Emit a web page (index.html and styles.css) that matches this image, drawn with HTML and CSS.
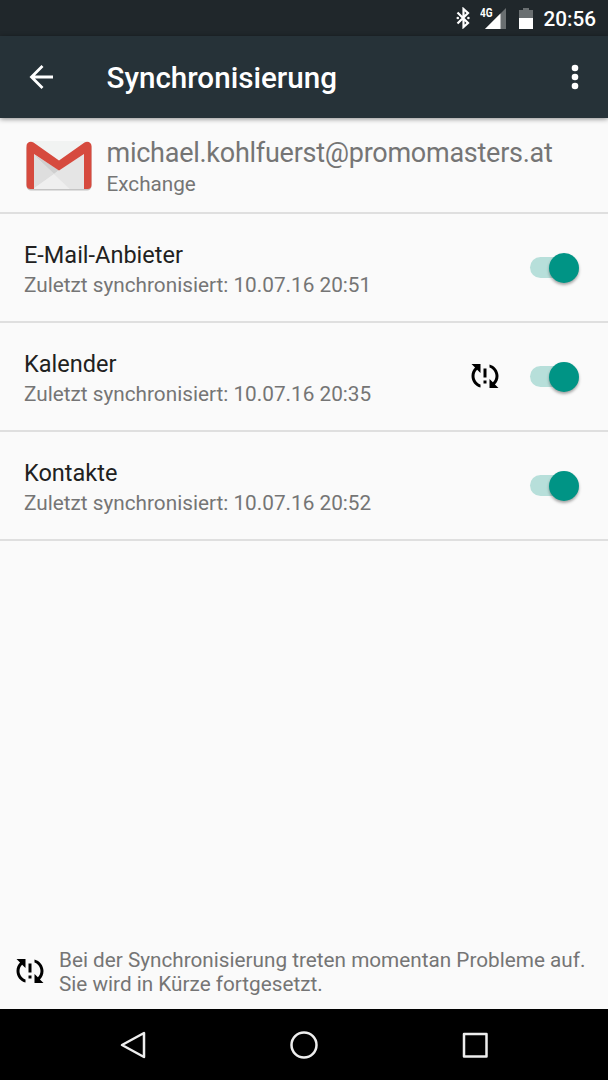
FILE: index.html
```
<!DOCTYPE html>
<html lang="de">
<head>
    <meta charset="UTF-8">
    <meta name="viewport" content="width=device-width, initial-scale=1.0">
    <title>Synchronisierung</title>
    <link rel="stylesheet" href="styles.css">
</head>
<body>
    <!-- Sync problem icon, shared by the list and the footer -->
    <svg class="icon-defs" width="0" height="0">
        <symbol id="sync-problem" viewBox="0 0 24 24">
            <path d="M3 12c0-2.21.91-4.2 2.36-5.64L3 4h6v6L6.76 7.76C5.68 8.85 5 10.34 5 12c0 2.61 1.67 4.83 4 5.65v2.09C5.55 18.85 3 15.73 3 12zM21 20h-6v-6l2.24 2.24C18.32 15.15 19 13.66 19 12c0-2.61-1.67-4.83-4-5.65V4.26C18.45 5.15 21 8.27 21 12c0 2.21-.91 4.2-2.36 5.64zM11 7h2v6h-2zM11 15h2v2h-2z"/>
        </symbol>
    </svg>

    <div class="screen">
        <div class="status-bar">
            <svg class="bluetooth" width="14" height="22" viewBox="0 0 14 22">
                <path d="M1.5 5.5l10.5 10.5-4.500 4V2l4.500 4L1.500 16.500" fill="none" stroke="#fff" stroke-width="2.2"/>
                <circle cx="1.8" cy="11" r="1.3" fill="#fff"/>
                <circle cx="12.4" cy="11" r="1.3" fill="#fff"/>
            </svg>
            <div class="signal">
                <svg width="21" height="21" viewBox="0 0 21 21">
                    <path d="M0 21L21 0v21z" fill="#6a6f71"/>
                    <path d="M0 21L15.500 5.500V21z" fill="#fff"/>
                </svg>
                <span class="network">4G</span>
            </div>
            <svg class="battery" width="14" height="21" viewBox="0 0 14 21">
                <path d="M0 2h4V0h6v2h4v8H0z" fill="#6a6f71"/>
                <path d="M0 10h14v11H0z" fill="#fff"/>
            </svg>
            <span class="clock">20:56</span>
        </div>

        <header class="toolbar">
            <svg class="back" width="26" height="26" viewBox="0 0 26 26">
                <path d="M25 13H3.500M14.500 2L3.500 13l11 11" fill="none" stroke="#fff" stroke-width="2.8"/>
            </svg>
            <h1 class="title">Synchronisierung</h1>
            <svg class="menu" width="8" height="26" viewBox="0 0 8 26">
                <circle cx="4" cy="4" r="3.3" fill="#fff"/>
                <circle cx="4" cy="13" r="3.3" fill="#fff"/>
                <circle cx="4" cy="22" r="3.3" fill="#fff"/>
            </svg>
        </header>

        <div class="account">
            <svg class="gmail" width="66" height="50" viewBox="0 0 66 50">
                <path d="M5 2h56a4.500 4.500 0 0 1 4.500 4.500v38.500a4.500 4.500 0 0 1-4.500 4.500H5a4.500 4.500 0 0 1-4.500-4.500V6.500z" fill="#c4c4c4"/>
                <path d="M5 0h56v48H5z" fill="#f1f3f2"/>
                <path d="M7 13l26 16 26-16v35H7z" fill="#e9e9e9"/>
                <path d="M7 13l21 20 5-4z" fill="#cfcfcf"/>
                <path d="M7 13v35L28 33z" fill="#dedede"/>
                <path d="M7 48l21-15 16 15z" fill="#efefef"/>
                <path d="M33 29L59 13v35H44L28 33z" fill="#e5e5e5"/>
                <path d="M.5 5C.5 1.200 4.500-.4 7.500 1.600L33 19.500 58.500 1.600C61.500-.4 65.500 1.200 65.500 5v39c0 2.500-1.500 4-4 4H58V13L33 29.500 8 13v35H4.500c-2.500 0-4-1.500-4-4z" fill="#d64a3e"/>
            </svg>
            <div class="account-text">
                <div class="email">michael.kohlfuerst@promomasters.at</div>
                <div class="provider">Exchange</div>
            </div>
        </div>

        <div class="sync-list">
            <div class="sync-item">
                <div class="sync-text">
                    <div class="sync-name">E-Mail-Anbieter</div>
                    <div class="sync-time">Zuletzt synchronisiert: 10.07.16 20:51</div>
                </div>
                <div class="switch"><div class="thumb"></div></div>
            </div>
            <div class="sync-item">
                <div class="sync-text">
                    <div class="sync-name">Kalender</div>
                    <div class="sync-time">Zuletzt synchronisiert: 10.07.16 20:35</div>
                </div>
                <svg class="sync-problem" width="36" height="36"><use href="#sync-problem"/></svg>
                <div class="switch"><div class="thumb"></div></div>
            </div>
            <div class="sync-item">
                <div class="sync-text">
                    <div class="sync-name">Kontakte</div>
                    <div class="sync-time">Zuletzt synchronisiert: 10.07.16 20:52</div>
                </div>
                <div class="switch"><div class="thumb"></div></div>
            </div>
        </div>

        <div class="sync-error">
            <svg class="sync-problem" width="36" height="36"><use href="#sync-problem"/></svg>
            <p>Bei der Synchronisierung treten momentan Probleme auf.<br>Sie wird in Kürze fortgesetzt.</p>
        </div>

        <nav class="nav-bar">
            <svg width="30" height="30" viewBox="0 0 30 30">
                <path d="M26 3v24L4 15z"/>
            </svg>
            <svg width="30" height="30" viewBox="0 0 30 30">
                <circle cx="15" cy="15" r="12.5"/>
            </svg>
            <svg width="30" height="30" viewBox="0 0 30 30">
                <rect x="4" y="4" width="22.5" height="22.5"/>
            </svg>
        </nav>
    </div>
</body>
</html>
```

FILE: styles.css
```
* {
    box-sizing: border-box;
}

body {
    margin: 0;
    font-family: Roboto, "Liberation Sans", sans-serif;
    background-color: #fafafa;
}

svg {
    display: block;
    flex: none;
}

.icon-defs {
    display: none;
}

.screen {
    display: flex;
    flex-direction: column;
    width: 608px;
    height: 1080px;
    overflow: hidden;
    white-space: nowrap;
}

/* Status bar */
.status-bar {
    display: flex;
    align-items: center;
    justify-content: flex-end;
    height: 36px;
    padding-right: 12px;
    background: #20272b;
    color: #fff;
}

.signal {
    position: relative;
    margin: 0 13px 0 15px;
}

.network {
    position: absolute;
    left: -5px;
    top: -1px;
    font-size: 12.5px;
    font-weight: bold;
    line-height: 12px;
    transform: scaleX(0.8);
    transform-origin: left;
}

.clock {
    margin: 1px 0 0 11px;
    font-size: 20.7px;
    font-weight: 500;
}

/* Toolbar */
.toolbar {
    display: flex;
    align-items: center;
    height: 82px;
    padding: 0 29px 0 28px;
    background: #263238;
    color: #fff;
    box-shadow: 0 1px 5px rgba(0, 0, 0, 0.45);
    z-index: 1;
}

.title {
    flex: 1;
    margin: 2px 0 0 52.5px;
    font-size: 29.6px;
    font-weight: 500;
}

/* Account header */
.account {
    display: flex;
    height: 96px;
    padding: 17px 0 0 26px;
    border-bottom: 2px solid #dfdfdf;
    color: #757575;
}

.gmail {
    margin-top: 6px;
}

.account-text {
    margin-left: 14.5px;
}

.email {
    font-size: 27px;
    line-height: 36px;
    letter-spacing: -0.26px;
}

.provider {
    font-size: 20.7px;
    line-height: 27px;
}

/* Sync entries */
.sync-item {
    display: flex;
    align-items: center;
    height: 109px;
    padding: 0 29px 0 24px;
    border-bottom: 2px solid #dfdfdf;
}

.sync-text {
    flex: 1;
    margin-top: 4px;
}

.sync-name {
    font-size: 23.5px;
    line-height: 30px;
    color: #212121;
}

.sync-time {
    font-size: 20.75px;
    line-height: 30px;
    color: #757575;
}

.sync-item .sync-problem {
    margin: 0 27px 1px 0;
}

.switch {
    display: flex;
    justify-content: flex-end;
    align-items: center;
    width: 49px;
    height: 21px;
    border-radius: 11px;
    background: linear-gradient(to right, #b7dfda 40px, transparent 40px);
}

.thumb {
    width: 30px;
    height: 30px;
    border-radius: 50%;
    background: #009485;
    box-shadow: 0 2px 3px rgba(0, 0, 0, 0.35);
}

/* Error message above the navigation */
.sync-error {
    display: flex;
    align-items: center;
    margin-top: auto;
    padding: 0 0 13px 12px;
}

.sync-error .sync-problem {
    margin-bottom: 2px;
}

.sync-error p {
    margin: 0 0 0 11px;
    font-size: 20.73px;
    line-height: 24px;
    color: #757575;
}

/* Navigation */
.nav-bar {
    display: flex;
    justify-content: space-between;
    align-items: center;
    height: 71px;
    padding: 0 118px;
    background: #000;
}

.nav-bar svg {
    fill: none;
    stroke: #eee;
    stroke-width: 2.5;
    stroke-linejoin: round;
}
```
